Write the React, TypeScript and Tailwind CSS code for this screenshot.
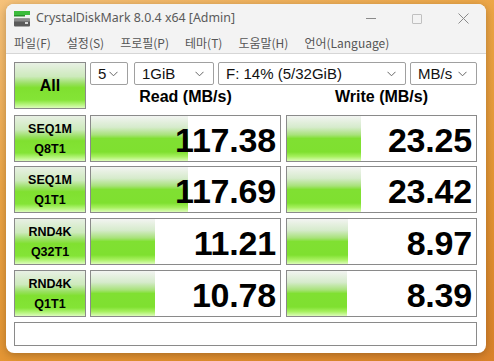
import React from 'react'

const rows = [
  { l1: 'SEQ1M', l2: 'Q8T1', read: '117.38', readW: 97, write: '23.25', writeW: 74 },
  { l1: 'SEQ1M', l2: 'Q1T1', read: '117.69', readW: 97, write: '23.42', writeW: 74 },
  { l1: 'RND4K', l2: 'Q32T1', read: '11.21', readW: 64, write: '8.97', writeW: 61 },
  { l1: 'RND4K', l2: 'Q1T1', read: '10.78', readW: 64, write: '8.39', writeW: 60 },
]

const rowMargins = ['mt-[6px]', 'mt-[4px]', 'mt-[5px]', 'mt-[5px]']

const barBg =
  'bg-[linear-gradient(to_bottom,#f2f4f1_0%,#d6ebcc_25%,#a8e27a_42%,#80e032_50%,#7fe030_80%,#a6f05e_90%,#dcfcb8_100%)]'
const labelBg =
  'bg-[linear-gradient(to_bottom,#e8f0e4_0%,#cdeabc_30%,#98e060_46%,#80e030_55%,#84e436_82%,#b4f47a_92%,#dcfcbc_100%)]'

const Chevron = () => (
  <svg width="9" height="6" viewBox="0 0 9 6" className="shrink-0">
    <path d="M0.5 0.8 L4.5 4.8 L8.5 0.8" fill="none" stroke="#666" strokeWidth="1" />
  </svg>
)

const Select = ({ value, className = '' }: { value: string; className?: string }) => (
  <div
    className={`h-[23px] flex items-center justify-between pl-[7px] pr-[9px] border border-[#a0a0a0] rounded-[2px] bg-white text-[15px] text-[#111] ${className}`}
  >
    <span className="leading-none">{value}</span>
    <Chevron />
  </div>
)

const Bar = ({ value, width }: { value: string; width: number }) => (
  <div className="relative h-full border border-[#8a8a8a] bg-white overflow-hidden">
    <div className={`absolute left-0 top-0 bottom-0 ${barBg}`} style={{ width }} />
    <div className="relative h-full flex items-center justify-end pr-[4px] pt-[2px] text-[34px] font-bold text-black leading-none tracking-[-0.2px]">
      {value}
    </div>
  </div>
)

export default function App() {
  return (
    <div
      className="w-[494px] h-[361px] pt-[4px] pl-[6px] bg-[linear-gradient(160deg,#f6c27a_0%,#eca545_35%,#e39432_70%,#d9822a_100%)] overflow-hidden"
      style={{ fontFamily: '"Liberation Sans", Arial, sans-serif' }}
    >
      <div className="w-[480px] h-[349px] bg-white rounded-[8px] overflow-hidden shadow-[0_2px_8px_rgba(0,0,0,0.25)] flex flex-col">
        {/* title bar */}
        <div className="h-[29px] bg-[#f3f3f3] flex items-center shrink-0">
          <svg width="16" height="16" viewBox="0 0 16 16" className="ml-[8px] mt-[1px]">
            <rect x="0" y="0" width="16" height="4" fill="#3cbc3c" />
            <rect x="0" y="4" width="11" height="1.5" fill="#2a8f2a" />
            <rect x="0" y="7.5" width="16" height="8" rx="1" fill="#5a5a5a" />
            <rect x="0" y="7.5" width="16" height="3" fill="#8a8a8a" />
            <rect x="11" y="11" width="3" height="2" fill="#d8d8d8" />
          </svg>
          <span className="ml-[6px] text-[12.4px] text-[#5a5a5a]" style={{ fontFamily: '"Noto Sans", sans-serif' }}>
            CrystalDiskMark 8.0.4 x64 [Admin]
          </span>
          <div className="ml-auto flex h-full">
            <div className="w-[46px] h-full flex items-center justify-center">
              <div className="w-[10px] h-[1px] bg-[#8a8a8a]" />
            </div>
            <div className="w-[46px] h-full flex items-center justify-center">
              <div className="w-[10px] h-[10px] border border-[#c0c0c0] rounded-[1px]" />
            </div>
            <div className="w-[46px] h-full flex items-center justify-center">
              <svg width="11" height="11" viewBox="0 0 11 11">
                <path d="M0.5 0.5 L10.5 10.5 M10.5 0.5 L0.5 10.5" stroke="#8a8a8a" strokeWidth="1" />
              </svg>
            </div>
          </div>
        </div>

        {/* menu bar */}
        <div
          className="h-[21px] bg-[#f3f3f3] border-b border-[#d6d6d6] flex items-center pl-[8px] gap-[16px] text-[12px] text-[#555] shrink-0"
          style={{ fontFamily: '"Noto Sans CJK KR", "Noto Sans", sans-serif' }}
        >
          <span>파일(F)</span>
          <span>설정(S)</span>
          <span>프로필(P)</span>
          <span>테마(T)</span>
          <span>도움말(H)</span>
          <span>언어(Language)</span>
        </div>

        {/* content */}
        <div className="px-[8px] pt-[8px] flex flex-col">
          <div className="flex gap-[4px]">
            <div className={`w-[72px] h-[47px] border border-[#8a8a8a] ${labelBg} flex items-center justify-center text-[16px] font-bold text-black`}>
              All
            </div>
            <div className="w-[387px] flex flex-col">
              <div className="flex h-[23px]">
                <Select value="5" className="w-[38px]" />
                <Select value="1GiB" className="w-[80px] ml-[6px]" />
                <Select value="F: 14% (5/32GiB)" className="w-[188px] ml-[4px]" />
                <Select value="MB/s" className="w-[67px] ml-[4px]" />
              </div>
              <div className="flex h-[24px] items-center text-[16px] font-bold text-black">
                <div className="w-[191px] text-center">Read (MB/s)</div>
                <div className="w-[191px] ml-[5px] text-center">Write (MB/s)</div>
              </div>
            </div>
          </div>

          {rows.map((r, i) => (
            <div key={i} className={`flex h-[47px] ${rowMargins[i]}`}>
              <div className={`w-[72px] h-full border border-[#8a8a8a] ${labelBg} flex flex-col items-center justify-center text-[12.5px] font-bold text-black leading-[20px]`}>
                <span>{r.l1}</span>
                <span>{r.l2}</span>
              </div>
              <div className="w-[191px] ml-[4px] h-full">
                <Bar value={r.read} width={r.readW} />
              </div>
              <div className="w-[191px] ml-[5px] h-full">
                <Bar value={r.write} width={r.writeW} />
              </div>
            </div>
          ))}

          <div className="mt-[5px] h-[24px] w-[463px] border border-[#8a8a8a] bg-white" />
        </div>
      </div>
    </div>
  )
}
